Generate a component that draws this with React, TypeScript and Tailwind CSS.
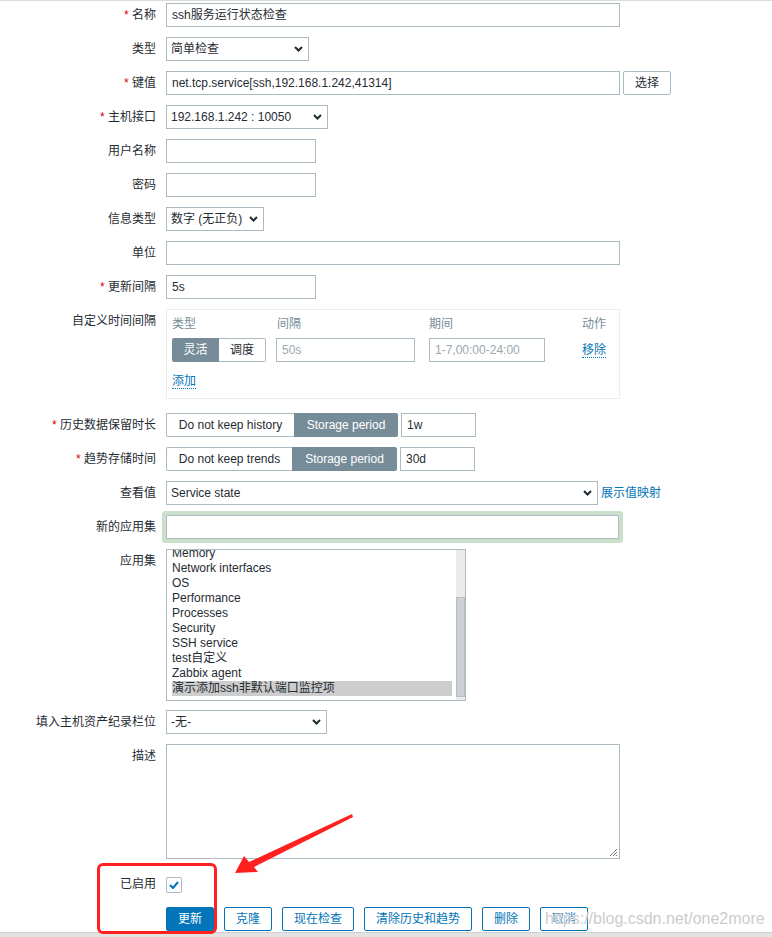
import React from "react";

const Chevron = () => (
  <svg width="9" height="6" viewBox="0 0 9 6" className="shrink-0">
    <path d="M1 1L4.5 4.5L8 1" fill="none" stroke="#1f2c33" strokeWidth="2" />
  </svg>
);

function Label({ text, req }: { text: string; req?: boolean }) {
  return (
    <div className="w-[156px] shrink-0 text-right h-6 leading-6 whitespace-nowrap">
      {req && <span className="text-[#d40000]">* </span>}
      {text}
    </div>
  );
}

function Row({
  label,
  req,
  className = "",
  children,
}: {
  label: string;
  req?: boolean;
  className?: string;
  children?: React.ReactNode;
}) {
  return (
    <div className={`flex items-start ${className}`}>
      <Label text={label} req={req} />
      <div className="ml-[10px] flex items-start">{children}</div>
    </div>
  );
}

function Box({ w, value = "", muted = false, extra = "" }: { w: string; value?: string; muted?: boolean; extra?: string }) {
  return (
    <div
      className={`${w} h-6 border border-[#acbbc2] bg-white flex items-center px-[5px] whitespace-nowrap overflow-hidden ${
        muted ? "text-[#9aa7af]" : "text-[#1f2c33]"
      } ${extra}`}
    >
      {value}
    </div>
  );
}

function Select({ w, value }: { w: string; value: string }) {
  return (
    <div className={`${w} h-6 border border-[#acbbc2] bg-white flex items-center justify-between pl-[4px] pr-[5px] whitespace-nowrap`}>
      <span>{value}</span>
      <Chevron />
    </div>
  );
}

function Btn({ w, text, primary = false }: { w: string; text: string; primary?: boolean }) {
  return (
    <div
      className={`${w} h-6 rounded-[2px] border border-[#0275b8] flex items-center justify-center ${
        primary ? "bg-[#0275b8] text-white" : "bg-white text-[#0275b8]"
      }`}
    >
      {text}
    </div>
  );
}

const apps = [
  "Memory",
  "Network interfaces",
  "OS",
  "Performance",
  "Processes",
  "Security",
  "SSH service",
  "test自定义",
  "Zabbix agent",
  "演示添加ssh非默认端口监控项",
];

export default function App() {
  return (
    <div className="relative w-[772px] h-[937px] overflow-hidden bg-white text-[12px] text-[#1f2c33] font-['Liberation_Sans','Noto_Sans_CJK_SC',sans-serif] border-t border-[#dcdcdc]">
      <div className="flex flex-col pt-[2px]">
        <Row label="名称" req>
          <Box w="w-[454px]" value="ssh服务运行状态检查" />
        </Row>
        <Row label="类型" className="mt-[10px]">
          <Select w="w-[143px]" value="简单检查" />
        </Row>
        <Row label="键值" req className="mt-[10px]">
          <Box w="w-[454px]" value="net.tcp.service[ssh,192.168.1.242,41314]" />
          <div className="ml-[3px] h-6 w-[48px] border border-[#acbbc2] rounded-[2px] flex items-center justify-center">选择</div>
        </Row>
        <Row label="主机接口" req className="mt-[10px]">
          <Select w="w-[162px]" value="192.168.1.242 : 10050" />
        </Row>
        <Row label="用户名称" className="mt-[10px]">
          <Box w="w-[150px]" />
        </Row>
        <Row label="密码" className="mt-[10px]">
          <Box w="w-[150px]" />
        </Row>
        <Row label="信息类型" className="mt-[10px]">
          <Select w="w-[98px]" value="数字 (无正负)" />
        </Row>
        <Row label="单位" className="mt-[10px]">
          <Box w="w-[454px]" />
        </Row>
        <Row label="更新间隔" req className="mt-[10px]">
          <Box w="w-[150px]" value="5s" />
        </Row>
        <Row label="自定义时间间隔" className="mt-[10px]">
          <div className="w-[454px] h-[90px] border border-[#ebeef0] px-[5px] pt-[5px]">
            <div className="grid grid-cols-[104px_153px_153px_auto]">
              <div className="h-[18px] leading-[18px] text-[#768d99]">类型</div>
              <div className="h-[18px] leading-[18px] text-[#768d99] pl-px">间隔</div>
              <div className="h-[18px] leading-[18px] text-[#768d99]">期间</div>
              <div className="h-[18px] leading-[18px] text-[#768d99]">动作</div>
              <div className="mt-[5px] flex">
                <div className="h-6 w-[47px] bg-[#768d99] text-white rounded-l-[2px] flex items-center justify-center">灵活</div>
                <div className="h-6 w-[47px] border border-[#acbbc2] border-l-0 rounded-r-[2px] flex items-center justify-center">调度</div>
              </div>
              <div className="mt-[5px]">
                <Box w="w-[139px]" value="50s" muted />
              </div>
              <div className="mt-[5px]">
                <Box w="w-[116px]" value="1-7,00:00-24:00" muted />
              </div>
              <div className="mt-[5px] h-6 flex items-center">
                <span className="text-[#0275b8] border-b border-dotted border-[#0275b8] leading-[14px]">移除</span>
              </div>
            </div>
            <div className="mt-[10px]">
              <span className="text-[#0275b8] border-b border-dotted border-[#0275b8] leading-[14px]">添加</span>
            </div>
          </div>
        </Row>
        <Row label="历史数据保留时长" req className="mt-[14px]">
          <div className="flex">
            <div className="h-6 w-[128px] border border-[#acbbc2] border-r-0 rounded-l-[2px] flex items-center justify-center">Do not keep history</div>
            <div className="h-6 w-[104px] bg-[#768d99] text-white rounded-r-[2px] flex items-center justify-center">Storage period</div>
          </div>
          <Box w="w-[75px]" value="1w" extra="ml-[3px]" />
        </Row>
        <Row label="趋势存储时间" req className="mt-[10px]">
          <div className="flex">
            <div className="h-6 w-[126px] border border-[#acbbc2] border-r-0 rounded-l-[2px] flex items-center justify-center">Do not keep trends</div>
            <div className="h-6 w-[105px] bg-[#768d99] text-white rounded-r-[2px] flex items-center justify-center">Storage period</div>
          </div>
          <Box w="w-[75px]" value="30d" extra="ml-[3px]" />
        </Row>
        <Row label="查看值" className="mt-[10px]">
          <Select w="w-[432px]" value="Service state" />
          <div className="ml-[3px] h-6 leading-6 text-[#0275b8]">展示值映射</div>
        </Row>
        <Row label="新的应用集" className="mt-[10px]">
          <div className="w-[453px] h-6 border border-[#acbbc2] bg-white shadow-[0_0_0_4px_#cbe0cb] rounded-[1px]" />
        </Row>
        <Row label="应用集" className="mt-[10px]">
          <div className="w-[300px] h-[152px] border border-[#acbbc2] flex overflow-hidden">
            <div className="flex-1 overflow-hidden pl-[5px] pr-[4px]">
              <div className="-mt-[4px]">
                {apps.map((a, i) => (
                  <div
                    key={a}
                    className={`h-[15px] leading-[15px] whitespace-nowrap ${i === apps.length - 1 ? "bg-[#cdcdcd]" : ""}`}
                  >
                    {a}
                  </div>
                ))}
              </div>
            </div>
            <div className="w-[9px] h-full bg-[#ebebeb] flex flex-col">
              <div className="h-[47px]" />
              <div className="flex-1 bg-[#cdd1d5] border border-[#b8bfc4] mb-[3px]" />
            </div>
          </div>
        </Row>
        <Row label="填入主机资产纪录栏位" className="mt-[9px]">
          <Select w="w-[161px]" value="-无-" />
        </Row>
        <Row label="描述" className="mt-[10px]">
          <div className="relative w-[454px] h-[115px] border border-[#acbbc2]">
            <svg width="9" height="9" viewBox="0 0 9 9" className="absolute right-[1px] bottom-[1px]">
              <path d="M8 1L1 8M8 4L4 8M8 7L7 8" stroke="#777" strokeWidth="1" />
            </svg>
          </div>
        </Row>
        <div className="flex items-start mt-[18px]">
          <div className="w-[156px] shrink-0 text-right h-[15px] leading-[15px]">已启用</div>
          <div className="ml-[10px] w-[16px] h-[16px] border border-[#acbbc2] rounded-[2px] flex items-center justify-center">
            <svg width="10" height="8" viewBox="0 0 10 8">
              <path d="M1 4L4 7L9 1" fill="none" stroke="#0275b8" strokeWidth="2" />
            </svg>
          </div>
        </div>
        <div className="flex ml-[166px] mt-[14px] gap-[10px]">
          <Btn w="w-[48px]" text="更新" primary />
          <Btn w="w-[48px]" text="克隆" />
          <Btn w="w-[72px]" text="现在检查" />
          <Btn w="w-[108px]" text="清除历史和趋势" />
          <Btn w="w-[48px]" text="删除" />
          <Btn w="w-[48px]" text="取消" />
        </div>
      </div>

      {/* bottom scrollbar strip */}
      <div className="absolute left-0 right-0 bottom-0 h-[5px] bg-[#e2e2e2] border-t border-[#d0d0d0]" />

      {/* annotation rectangle */}
      <div className="absolute left-[97px] top-[862px] w-[120px] h-[71px] border-[3px] border-[#ff2020] rounded-[6px] pointer-events-none" />

      {/* annotation arrow */}
      <svg className="absolute left-0 top-0 pointer-events-none" width="772" height="937" viewBox="0 0 772 937">
        <polygon
          points="235,872 244,855 249,861 352,813 353,816 254,866 258,871"
          fill="#ff2020"
        />
      </svg>

      {/* watermark */}
      <div className="absolute left-[545px] top-[907px] text-[16px] leading-[22px] text-[#cccccc] [text-shadow:0_0_2px_#ffffff] pointer-events-none whitespace-nowrap">
        https://blog.csdn.net/one2more
      </div>
    </div>
  );
}
